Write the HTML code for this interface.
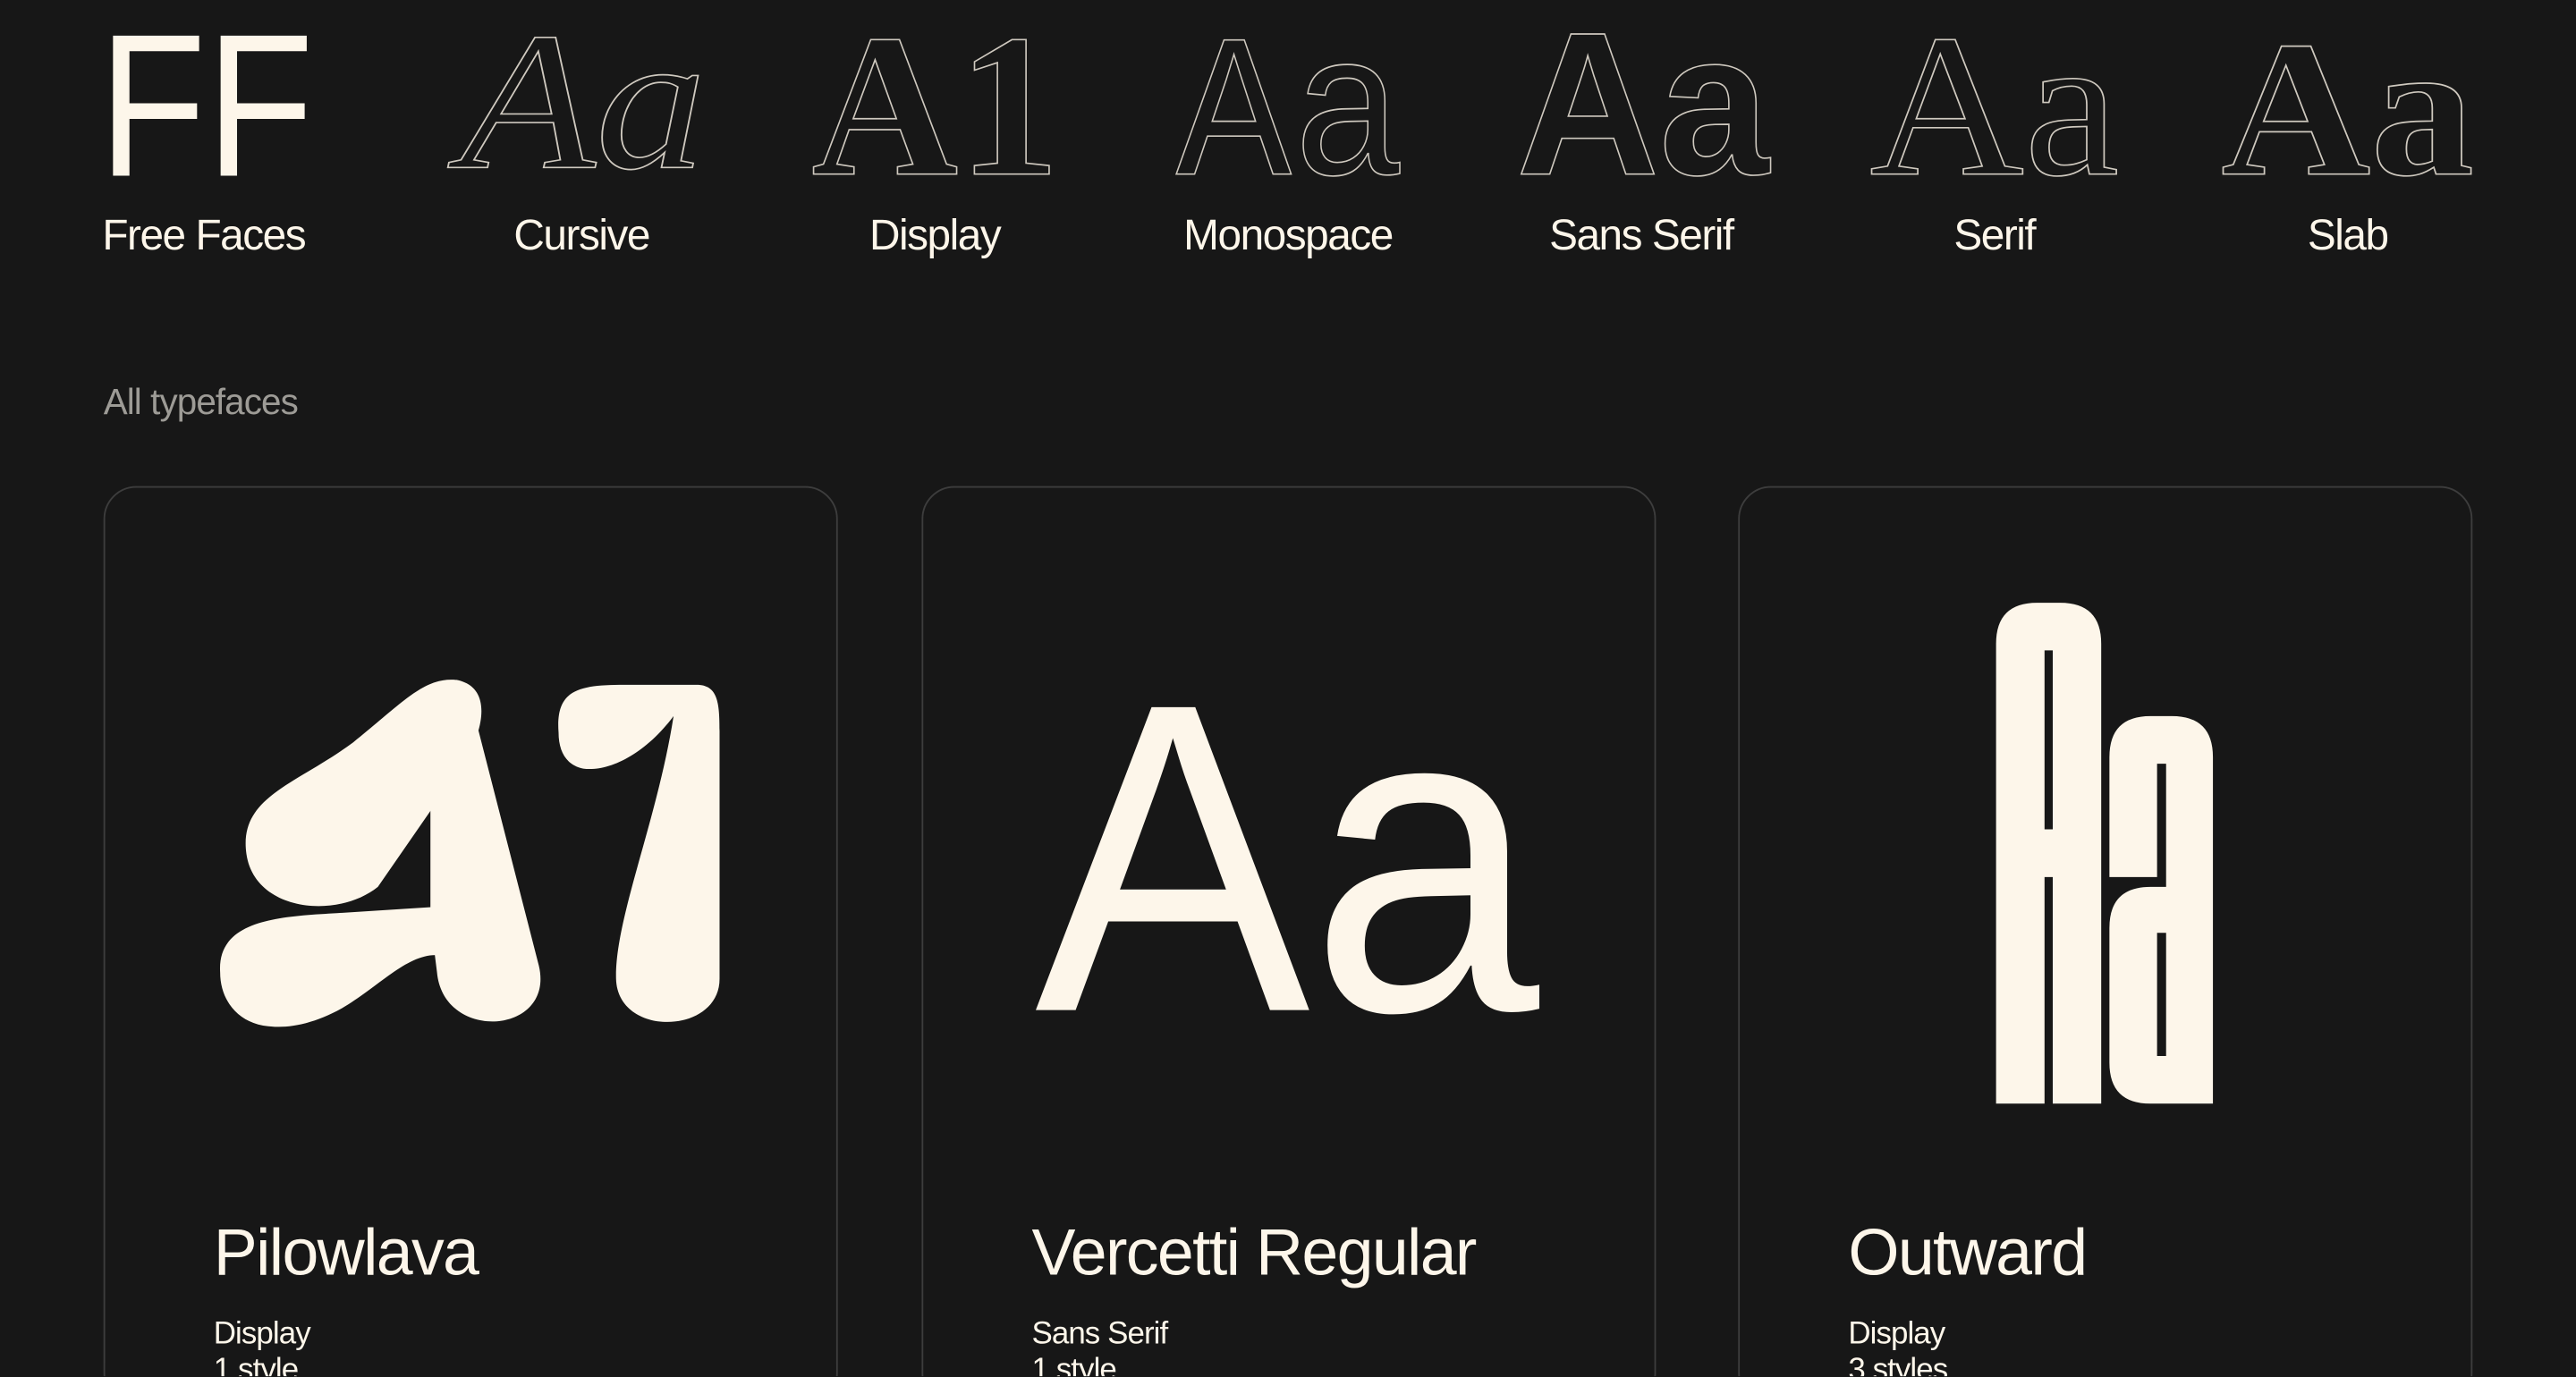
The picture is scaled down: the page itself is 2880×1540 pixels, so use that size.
<!DOCTYPE html>
<html><head><meta charset="utf-8"><style>
html,body{margin:0;padding:0;background:#171717;overflow:hidden;width:2880px;height:1540px}
#w{position:absolute;left:0;top:0;width:1568px;height:838px;overflow:hidden;transform:scale(1.83673);transform-origin:0 0;font-family:"Liberation Sans",sans-serif;color:#fdf6ea}
.lab{position:absolute;top:128px;font-size:26px;letter-spacing:-0.8px;transform:translateX(-50%);white-space:nowrap}
.all{position:absolute;left:63px;top:232px;font-size:22px;color:#9d9b96;letter-spacing:-0.5px}
.card{position:absolute;top:296px;width:447px;height:560px;border:1px solid #3d3d3d;border-radius:20px;box-sizing:border-box}
.t{position:absolute;left:66px;top:444px;font-size:40px;letter-spacing:-0.9px;white-space:nowrap}
.s{position:absolute;left:66px;top:505px;font-size:19px;letter-spacing:-0.5px;line-height:22px}
svg{position:absolute;left:0;top:0}
</style></head><body><div id="w">
<svg width="1568" height="838" viewBox="0 0 1568 838">
<g fill="none" stroke="#cfc9bf" stroke-width="0.9">
<text x="280" y="102" font-family="Liberation Serif" font-style="italic" font-size="120" textLength="150" lengthAdjust="spacingAndGlyphs">Aa</text>
<text x="494" y="106" font-family="Liberation Serif" font-weight="bold" font-size="124" textLength="151" lengthAdjust="spacingAndGlyphs">A1</text>
<text x="716" y="106" font-family="Liberation Mono" font-size="124" textLength="140" lengthAdjust="spacingAndGlyphs">Aa</text>
<text x="923" y="106" font-family="Liberation Sans" font-weight="bold" font-size="124" textLength="154" lengthAdjust="spacingAndGlyphs">Aa</text>
<text x="1138" y="106" font-family="Liberation Serif" font-size="124" textLength="152" lengthAdjust="spacingAndGlyphs">Aa</text>
<text x="1352" y="106" font-family="Liberation Serif" font-weight="bold" font-size="118" textLength="154" lengthAdjust="spacingAndGlyphs">Aa</text>
</g>
<text x="60" y="107" fill="#fdf6ea" font-family="Liberation Sans" font-size="124" textLength="131" lengthAdjust="spacingAndGlyphs">FF</text>
<g fill="#fdf6ea">
<path d="M150 520 C145 485 180 478 215 452 C245 428 258 412 278 414 C298 418 296 440 284 462 L230 540 C205 560 155 555 150 520 Z"/>
<path d="M262 430 C270 415 286 415 290 440 L328 588 C338 630 270 635 266 592 L262 560 Z"/>
<path d="M134 592 C132 560 170 558 205 556 L268 552 L270 582 C250 578 232 600 208 614 C190 624 175 626 165 625 C146 624 134 610 134 592 Z"/>
<path d="M340 446 C338 420 352 417 380 417 L424 417 C437 417 438 428 438 445 L438 596 C438 630 376 632 375 596 C374 560 400 500 410 436 C392 460 370 470 355 468 C345 466 340 458 340 446 Z"/>
</g>
<text x="630" y="615" fill="#fdf6ea" font-family="Liberation Sans" font-size="268" textLength="307" lengthAdjust="spacingAndGlyphs">Aa</text>
<g fill="#fdf6ea">
<path d="M1215 672 L1215 392 Q1215 367 1240 367 L1254 367 Q1279 367 1279 392 L1279 672 L1249.5 672 L1249.5 534 L1244.5 534 L1244.5 672 Z M1244.5 396 L1244.5 505 L1249.5 505 L1249.5 396 Z" fill-rule="evenodd"/>
<path d="M1284 534 L1284 461 Q1284 436 1309 436 L1322 436 Q1347 436 1347 461 L1347 672 L1309 672 Q1284 672 1284 647 L1284 565 Q1284 540 1309 540 L1318.5 540 L1318.5 465 L1313 465 L1313 534 Z M1313 568 L1313 643 L1318.5 643 L1318.5 568 Z" fill-rule="evenodd"/>
</g>
</svg>
<div class="lab" style="left:124px">Free Faces</div>
<div class="lab" style="left:354px">Cursive</div>
<div class="lab" style="left:569px">Display</div>
<div class="lab" style="left:784px">Monospace</div>
<div class="lab" style="left:999px">Sans Serif</div>
<div class="lab" style="left:1214px">Serif</div>
<div class="lab" style="left:1429px">Slab</div>
<div class="all">All typefaces</div>
<div class="card" style="left:63px"><div class="t">Pilowlava</div><div class="s">Display<br>1 style</div></div>
<div class="card" style="left:561px"><div class="t">Vercetti Regular</div><div class="s">Sans Serif<br>1 style</div></div>
<div class="card" style="left:1058px"><div class="t">Outward</div><div class="s">Display<br>3 styles</div></div>
</div></body></html>
